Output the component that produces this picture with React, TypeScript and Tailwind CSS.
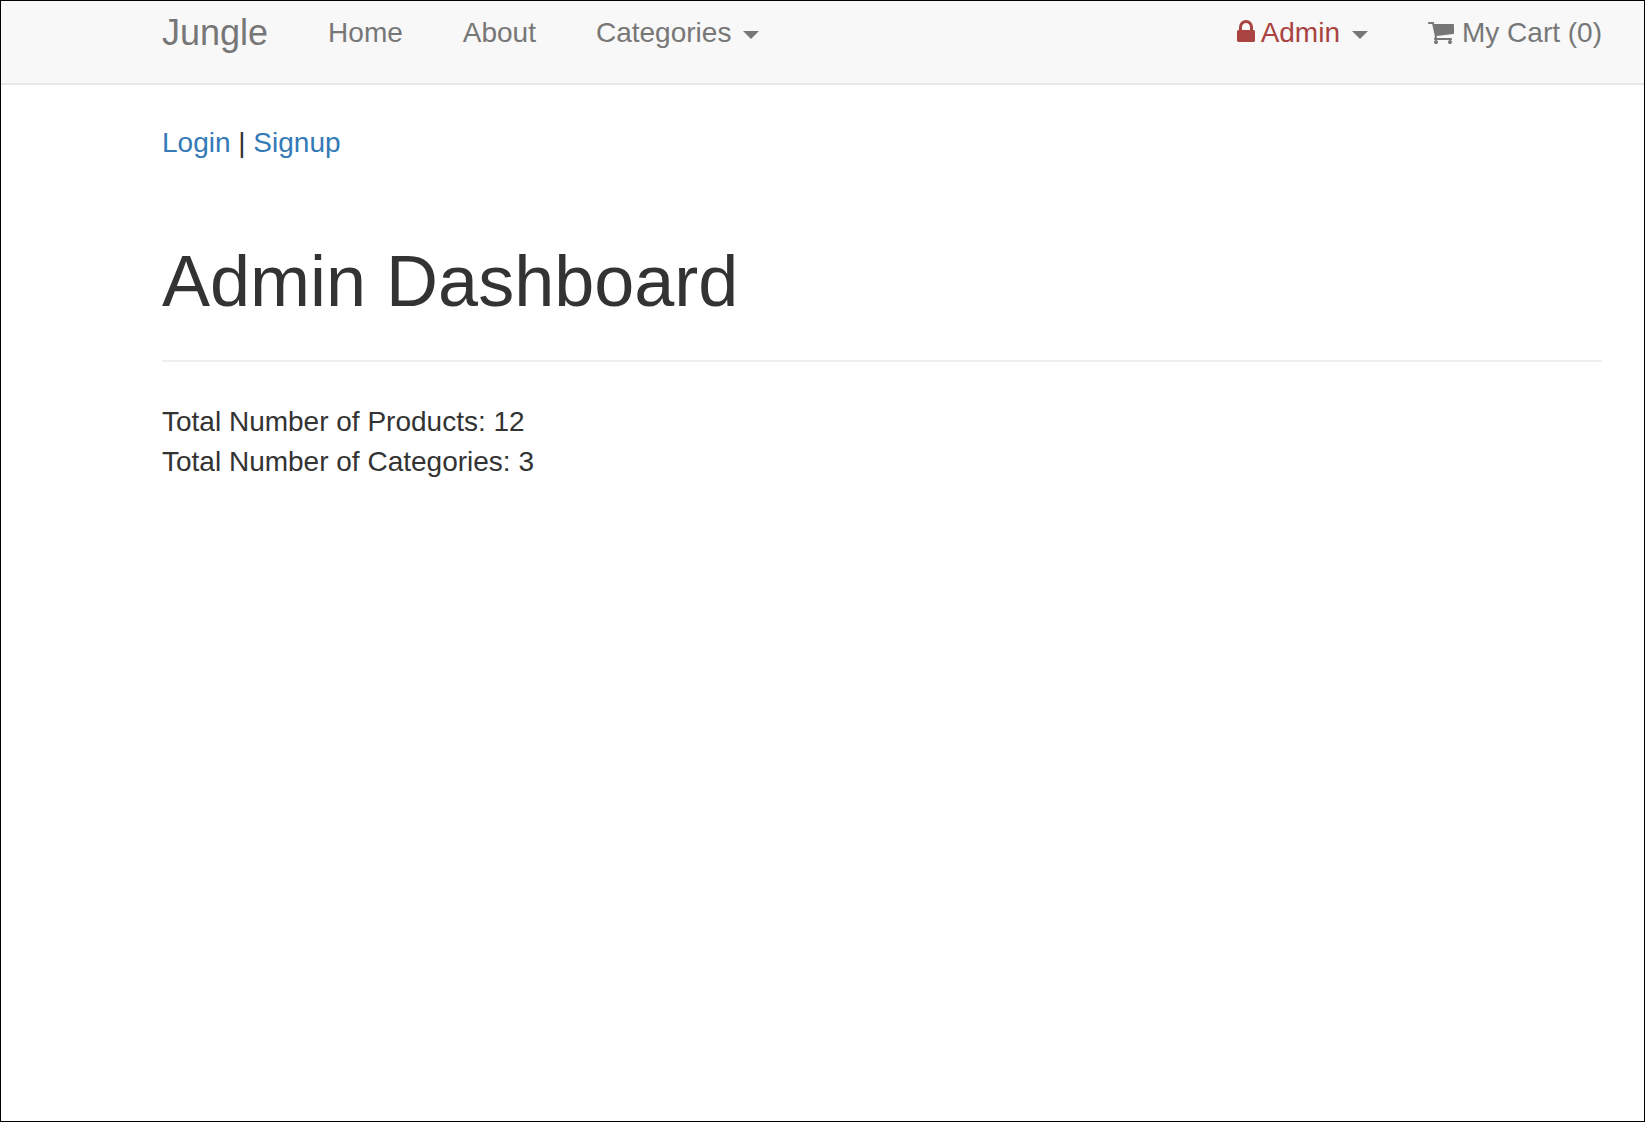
function Caret() {
  return (
    <span className="ml-3 inline-block border-x-8 border-t-8 border-x-transparent border-t-[#777777] align-middle" />
  );
}

function LockIcon() {
  return (
    <svg viewBox="320 128 1152 1408" className="mr-1.5 inline-block h-[22px] w-[18px] align-baseline" fill="currentColor" aria-hidden="true">
      <path d="M640 768h512v-192q0-106-75-181t-181-75-181 75-75 181v192zm832 96v576q0 40-28 68t-68 28h-960q-40 0-68-28t-28-68v-576q0-40 28-68t68-28h32v-192q0-184 132-316t316-132 316 132 132 316v192h32q40 0 68 28t28 68z" />
    </svg>
  );
}

function CartIcon() {
  return (
    <svg viewBox="64 256 1664 1408" className="mr-2 h-[22px] w-[26px]" fill="currentColor" aria-hidden="true">
      <path d="M704 1536q0 52-38 90t-90 38-90-38-38-90 38-90 90-38 90 38 38 90zm896 0q0 52-38 90t-90 38-90-38-38-90 38-90 90-38 90 38 38 90zm128-1088v512q0 24-16.500 42.500t-40.500 21.500l-1044 122q13 60 13 70 0 16-24 64h920q26 0 45 19t19 45-19 45-45 19h-1024q-26 0-45-19t-19-45q0-11 8-31.500t16-36 21.500-40 15.500-29.500l-177-823h-204q-26 0-45-19t-19-45 19-45 45-19h256q16 0 28.500 6.500t19.500 15.500 13 24.500 8 26 5.500 29.500 4.500 26h1201q26 0 45 19t19 45z" />
    </svg>
  );
}

export default function App() {
  return (
    <div className="min-h-screen border border-black bg-white pb-8 font-['Liberation_Sans',sans-serif] text-[28px] leading-10 text-[#333333]">
      <nav className="flex h-[84px] items-start justify-between border-b-2 border-[#e7e7e7] bg-[#f8f8f8] pr-[42px] pl-[161px] pt-3 text-[#777777]">
        <div className="flex items-center gap-[60px]">
          <a href="#" className="text-4xl leading-10">Jungle</a>
          <a href="#">Home</a>
          <a href="#">About</a>
          <button type="button">Categories<Caret /></button>
        </div>
        <div className="flex items-center gap-[60px]">
          <button type="button" className="text-[#a94442]">
            <LockIcon />Admin<Caret />
          </button>
          <a href="#" className="flex items-center">
            <CartIcon />My Cart (0)
          </a>
        </div>
      </nav>
      <main className="pr-[42px] pl-[161px]">
        <div className="pt-[38px]">
          <a href="#" className="text-[#337ab7]">Login</a> | <a href="#" className="text-[#337ab7]">Signup</a>
        </div>
        <header className="mt-[78px] border-b-2 border-[#eeeeee] pb-[39px]">
          <h1 className="text-[72px] leading-20 font-normal">Admin Dashboard</h1>
        </header>
        <p className="mt-10">Total Number of Products: 12</p>
        <p>Total Number of Categories: 3</p>
      </main>
    </div>
  );
}
